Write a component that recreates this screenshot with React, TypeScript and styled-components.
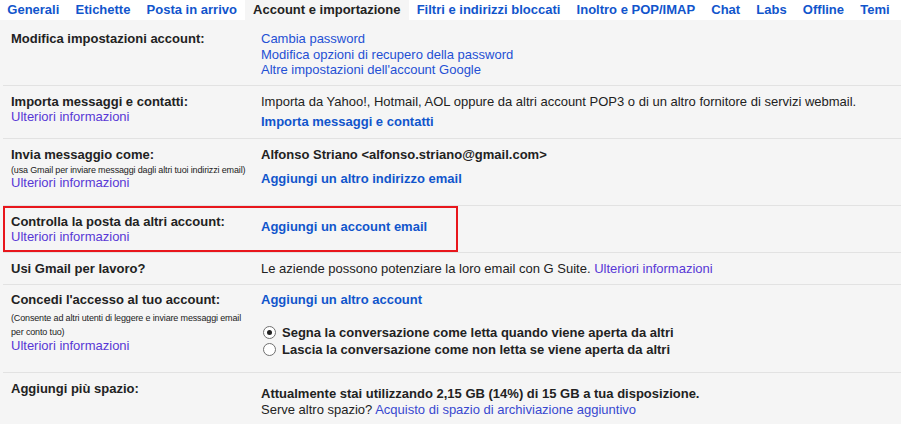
import React from "react";
import styled, { createGlobalStyle } from "styled-components";

const Global = createGlobalStyle`
  html, body { margin: 0; padding: 0; background: #f5f5f5; }
  body {
    font-family: "Liberation Sans", Arial, sans-serif;
    font-size: 13px;
    color: #222;
  }
`;

const Page = styled.div`
  width: 901px;
  height: 424px;
  overflow: hidden;
  background: #f5f5f5;
`;

const TabBar = styled.nav`
  display: flex;
  height: 20px;
  background: #fff;
`;

const Tab = styled.a<{ $active?: boolean }>`
  display: block;
  padding: 0 8.1px;
  line-height: 20px;
  font-size: 13px;
  font-weight: bold;
  white-space: nowrap;
  text-decoration: none;
  cursor: pointer;
  color: ${(p) => (p.$active ? "#222" : "#15c")};
  background: ${(p) => (p.$active ? "#f5f5f5" : "transparent")};
  &:first-child {
    padding-left: 7.3px;
  }
`;

const Settings = styled.div`
  margin-left: 3px;
  padding-top: 3px;
`;

const Row = styled.section<{ $pt?: number; $pb?: number }>`
  position: relative;
  display: grid;
  grid-template-columns: 250px 1fr;
  padding: ${(p) => p.$pt ?? 8}px 0 ${(p) => p.$pb ?? 8}px 8px;
  border-bottom: 1px solid #e2e2e2;
  &:last-child {
    border-bottom: none;
  }
`;

const Highlight = styled.div`
  position: absolute;
  left: 0;
  top: 0;
  width: 455px;
  height: 100%;
  box-sizing: border-box;
  border: 2px solid #e8161c;
  pointer-events: none;
`;

const LabelCol = styled.div`
  display: flex;
  flex-direction: column;
`;

const Label = styled.div`
  font-weight: bold;
  line-height: 16px;
  color: #222;
`;

const Note = styled.div<{ $lh?: number; $mt?: number }>`
  font-size: 9px;
  letter-spacing: -0.15px;
  line-height: ${(p) => p.$lh ?? 14}px;
  margin-top: ${(p) => p.$mt ?? 2}px;
  white-space: nowrap;
  color: #222;
`;

const More = styled.a`
  line-height: 14px;
  color: #5838d6;
  text-decoration: none;
  cursor: pointer;
`;

const ValueCol = styled.div<{ $mt?: number }>`
  display: flex;
  flex-direction: column;
  align-items: flex-start;
  padding-top: ${(p) => p.$mt ?? 0}px;
`;

const LinkList = styled.div`
  display: flex;
  flex-direction: column;
  align-items: flex-start;
  line-height: 15.5px;
`;

const PlainLink = styled.a`
  color: #2450d4;
  text-decoration: none;
  cursor: pointer;
`;

const Text = styled.div<{ $bold?: boolean; $lh?: number }>`
  line-height: ${(p) => p.$lh ?? 16}px;
  font-weight: ${(p) => (p.$bold ? "bold" : "normal")};
  color: #222;
  white-space: nowrap;
`;

const ActionLink = styled.a<{ $mt?: number }>`
  display: block;
  margin-top: ${(p) => p.$mt ?? 0}px;
  line-height: 16px;
  font-weight: bold;
  color: #15c;
  text-decoration: none;
  cursor: pointer;
`;

const InlineLink = styled.a<{ $visited?: boolean }>`
  color: ${(p) => (p.$visited ? "#5838d6" : "#3848d0")};
  text-decoration: none;
  cursor: pointer;
`;

const RadioGroup = styled.div`
  display: flex;
  flex-direction: column;
  margin-top: 15.5px;
`;

const RadioRow = styled.label`
  display: flex;
  align-items: center;
  line-height: 17px;
  font-weight: bold;
  color: #222;
  white-space: nowrap;
`;

const Radio = styled.span<{ $checked?: boolean }>`
  display: inline-flex;
  align-items: center;
  justify-content: center;
  box-sizing: border-box;
  width: 13px;
  height: 13px;
  margin: 0 6px 0 2px;
  border: 1px solid #707070;
  border-radius: 50%;
  background: #fff;
  &::after {
    content: "";
    display: ${(p) => (p.$checked ? "block" : "none")};
    width: 5px;
    height: 5px;
    border-radius: 50%;
    background: #222;
  }
`;

const tabs = [
  "Generali",
  "Etichette",
  "Posta in arrivo",
  "Account e importazione",
  "Filtri e indirizzi bloccati",
  "Inoltro e POP/IMAP",
  "Chat",
  "Labs",
  "Offline",
  "Temi",
];

export default function App() {
  return (
    <Page>
      <Global />
      <TabBar>
        {tabs.map((t) => (
          <Tab key={t} $active={t === "Account e importazione"}>
            {t}
          </Tab>
        ))}
      </TabBar>
      <Settings>
        <Row $pt={8} $pb={7.5}>
          <LabelCol>
            <Label>Modifica impostazioni account:</Label>
          </LabelCol>
          <ValueCol>
            <LinkList>
              <PlainLink>Cambia password</PlainLink>
              <PlainLink>Modifica opzioni di recupero della password</PlainLink>
              <PlainLink>Altre impostazioni dell'account Google</PlainLink>
            </LinkList>
          </ValueCol>
        </Row>

        <Row $pb={8}>
          <LabelCol>
            <Label>Importa messaggi e contatti:</Label>
            <More>Ulteriori informazioni</More>
          </LabelCol>
          <ValueCol>
            <Text>
              Importa da Yahoo!, Hotmail, AOL oppure da altri account POP3 o di un altro fornitore di servizi webmail.
            </Text>
            <ActionLink $mt={4}>Importa messaggi e contatti</ActionLink>
          </ValueCol>
        </Row>

        <Row $pb={15}>
          <LabelCol>
            <Label>Invia messaggio come:</Label>
            <Note $lh={11} $mt={2}>
              (usa Gmail per inviare messaggi dagli altri tuoi indirizzi email)
            </Note>
            <More>Ulteriori informazioni</More>
          </LabelCol>
          <ValueCol>
            <Text $bold>Alfonso Striano &lt;alfonso.striano@gmail.com&gt;</Text>
            <ActionLink $mt={8}>Aggiungi un altro indirizzo email</ActionLink>
          </ValueCol>
        </Row>

        <Row $pb={8}>
          <Highlight />
          <LabelCol>
            <Label>Controlla la posta da altri account:</Label>
            <More>Ulteriori informazioni</More>
          </LabelCol>
          <ValueCol>
            <ActionLink $mt={5}>Aggiungi un account email</ActionLink>
          </ValueCol>
        </Row>

        <Row $pb={7}>
          <LabelCol>
            <Label>Usi Gmail per lavoro?</Label>
          </LabelCol>
          <ValueCol>
            <Text>
              Le aziende possono potenziare la loro email con G Suite.{" "}
              <InlineLink $visited>Ulteriori informazioni</InlineLink>
            </Text>
          </ValueCol>
        </Row>

        <Row $pt={7} $pb={14}>
          <LabelCol>
            <Label>Concedi l'accesso al tuo account:</Label>
            <Note $mt={3}>
              (Consente ad altri utenti di leggere e inviare messaggi email
              <br />
              per conto tuo)
            </Note>
            <More>Ulteriori informazioni</More>
          </LabelCol>
          <ValueCol>
            <ActionLink>Aggiungi un altro account</ActionLink>
            <RadioGroup>
              <RadioRow>
                <Radio $checked />
                Segna la conversazione come letta quando viene aperta da altri
              </RadioRow>
              <RadioRow>
                <Radio />
                Lascia la conversazione come non letta se viene aperta da altri
              </RadioRow>
            </RadioGroup>
          </ValueCol>
        </Row>

        <Row>
          <LabelCol>
            <Label>Aggiungi più spazio:</Label>
          </LabelCol>
          <ValueCol $mt={5}>
            <Text $bold>
              Attualmente stai utilizzando 2,15 GB (14%) di 15 GB a tua disposizione.
            </Text>
            <Text $lh={15}>
              Serve altro spazio?{" "}
              <InlineLink>Acquisto di spazio di archiviazione aggiuntivo</InlineLink>
            </Text>
          </ValueCol>
        </Row>
      </Settings>
    </Page>
  );
}
